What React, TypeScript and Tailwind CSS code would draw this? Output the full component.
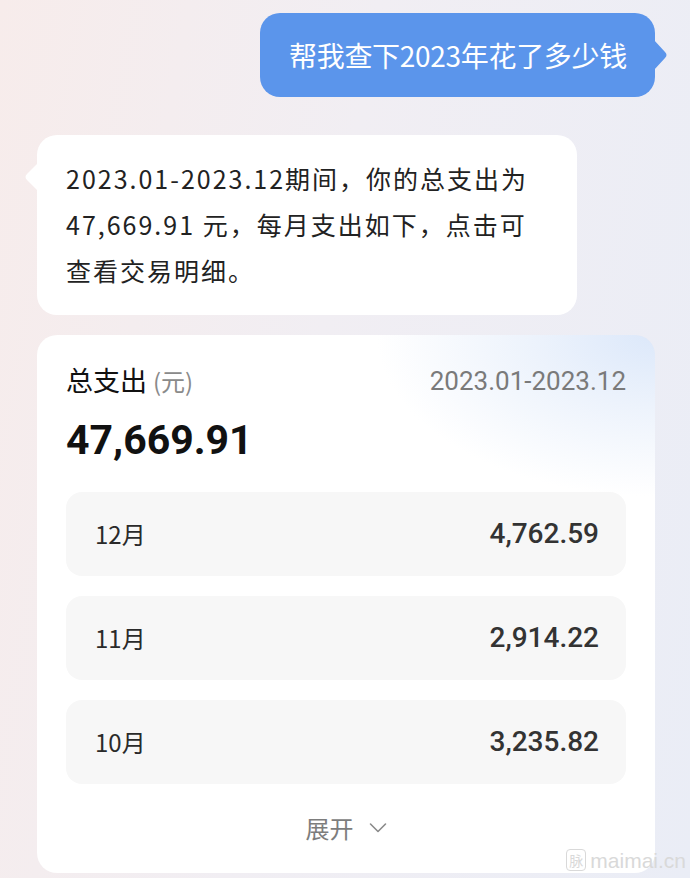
import React from 'react'

const months = [
  { label: '12月', amount: '4,762.59' },
  { label: '11月', amount: '2,914.22' },
  { label: '10月', amount: '3,235.82' },
]

export default function App() {
  return (
    <div className="relative min-h-[878px] w-[690px] overflow-hidden bg-[linear-gradient(100deg,#f7eceb_0%,#f1eef3_45%,#eaedf6_100%)] pt-[13px] font-['Noto_Sans_CJK_SC',sans-serif]">
      {/* question bubble */}
      <div className="flex justify-end pr-[35px]">
        <div className="relative flex h-[84px] w-[395px] items-center whitespace-nowrap rounded-[20px] bg-[#5b95eb] pl-[29px] text-[28px] tracking-[-0.3px] text-white">
          帮我查下2023年花了多少钱
          <svg className="absolute right-[-13px] top-[27px]" width="14" height="30" viewBox="0 0 14 30">
            <path d="M0 0 L11 12 Q14 15 11 18 L0 30 Z" fill="#5b95eb" />
          </svg>
        </div>
      </div>

      {/* answer bubble */}
      <div className="mt-[38px] pl-[37px]">
        <div className="relative w-[540px] rounded-[20px] bg-white pb-[22px] pl-[29px] pt-[20px] text-[25px] leading-[46px] tracking-[2px] text-[#222]">
          <svg className="absolute left-[-13px] top-[28px]" width="14" height="28" viewBox="0 0 14 28">
            <path d="M14 0 L3 11 Q0 14 3 17 L14 28 Z" fill="#ffffff" />
          </svg>
          2023.01-2023.12期间，你的总支出为
          <br />
          47,669.91 元，每月支出如下，点击可
          <br />
          查看交易明细。
        </div>
      </div>

      {/* summary card */}
      <div className="mx-[37px] mt-[20px] w-[618px] overflow-hidden rounded-[20px] bg-white bg-[radial-gradient(ellipse_45%_30%_at_100%_0%,#dce8fa_0%,#edf3fc_45%,rgba(255,255,255,0)_100%)] px-[29px] pb-[25px] pt-[27px]">
        <div className="flex items-center justify-between leading-[36px]">
          <div className="flex items-baseline gap-[6px]">
            <span className="text-[27px] text-[#111]">总支出</span>
            <span className="text-[24px] text-[#8a8a8a]">(元)</span>
          </div>
          <span className="font-['Roboto','Noto_Sans_CJK_SC',sans-serif] text-[26px] text-[#7a7a7a]">2023.01-2023.12</span>
        </div>
        <div className="mt-[16px] font-['Roboto',sans-serif] text-[41px] font-bold leading-[50px] text-[#111]">
          47,669.91
        </div>

        <div className="mt-[27px] flex flex-col gap-[20px]">
          {months.map((m) => (
            <div
              key={m.label}
              className="flex h-[84px] items-center justify-between rounded-[16px] bg-[#f7f7f7] pl-[29px] pr-[27px]"
            >
              <span className="text-[24px] text-[#2a2a2a]">{m.label}</span>
              <span className="font-['Roboto',sans-serif] text-[28px] font-medium text-[#333]">{m.amount}</span>
            </div>
          ))}
        </div>

        <div className="mt-[24px] flex items-center justify-center gap-[15px] leading-[40px] text-[#7d7d7d]">
          <span className="text-[24px]">展开</span>
          <svg width="18" height="12" viewBox="0 0 18 12" fill="none">
            <path d="M1.5 2 L9 9.5 L16.5 2" stroke="#8a8a8a" strokeWidth="1.6" strokeLinecap="round" strokeLinejoin="round" />
          </svg>
        </div>
      </div>

      {/* watermark */}
      <div className="absolute bottom-[7px] right-[4px] flex items-center gap-[4px] text-[#d9d9d9]">
        <span className="flex h-[22px] w-[20px] items-center justify-center rounded-[4px] border border-[#d9d9d9] text-[14px] leading-none">脉</span>
        <span className="font-['Liberation_Sans',sans-serif] text-[21px] leading-none">maimai.cn</span>
      </div>
    </div>
  )
}
